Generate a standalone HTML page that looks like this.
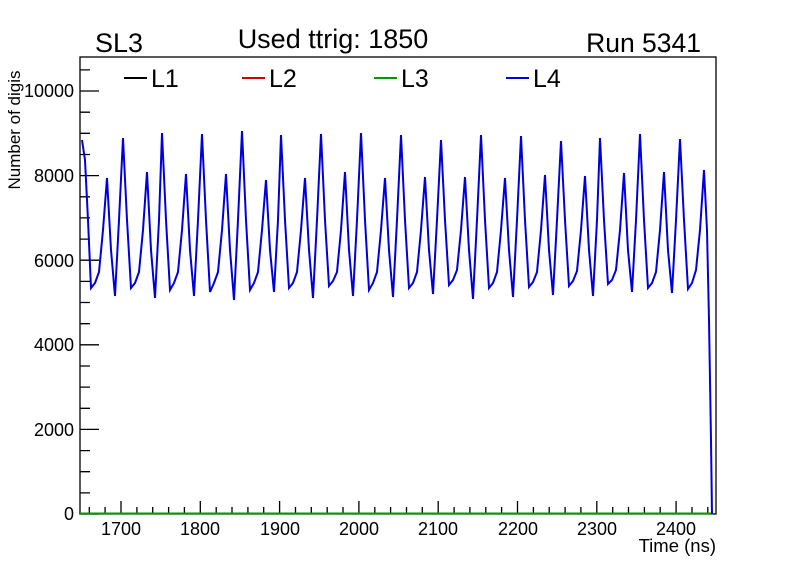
<!DOCTYPE html>
<html><head><meta charset="utf-8"><style>
html,body{margin:0;padding:0;background:#fff;}
svg{display:block;font-family:"Liberation Sans",sans-serif;}
</style></head><body>
<svg width="796" height="572" viewBox="0 0 796 572" xmlns="http://www.w3.org/2000/svg">
<rect width="796" height="572" fill="#fff"/>
<text x="95" y="52" font-size="27">SL3</text>
<text x="333" y="48" font-size="27" text-anchor="middle">Used ttrig: 1850</text>
<text x="701" y="52" font-size="26.5" text-anchor="end">Run 5341</text>
<rect x="80" y="57" width="636" height="457" fill="none" stroke="#000" stroke-width="1.3"/>
<g stroke="#000" stroke-width="1.3">
<path d="M80 514H99M80 429.4H99M80 344.8H99M80 260.2H99M80 175.6H99M80 91H99"/>
<path d="M80 492.9H90M80 471.7H90M80 450.6H90M80 408.3H90M80 387.1H90M80 366H90M80 323.7H90M80 302.5H90M80 281.4H90M80 239.1H90M80 217.9H90M80 196.8H90M80 154.5H90M80 133.3H90M80 112.2H90M80 69.9H90"/>
</g>
<g font-size="18" text-anchor="end">
<text x="74" y="520">0</text>
<text x="74" y="436">2000</text>
<text x="74" y="351">4000</text>
<text x="74" y="267">6000</text>
<text x="74" y="182">8000</text>
<text x="74" y="97">10000</text>
</g>
<text transform="translate(20,130) rotate(-90)" font-size="17" text-anchor="middle">Number of digis</text>
<g stroke="#000" stroke-width="1.3">
<path d="M121 514V501M200.3 514V501M279.6 514V501M358.9 514V501M438.2 514V501M517.5 514V501M596.8 514V501M676.1 514V501"/>
<path d="M89.3 514V507M105.1 514V507M136.9 514V507M152.7 514V507M168.6 514V507M184.4 514V507M216.2 514V507M232 514V507M247.9 514V507M263.7 514V507M295.5 514V507M311.3 514V507M327.2 514V507M343 514V507M374.8 514V507M390.6 514V507M406.5 514V507M422.3 514V507M454.1 514V507M469.9 514V507M485.8 514V507M501.6 514V507M533.4 514V507M549.2 514V507M565.1 514V507M580.9 514V507M612.7 514V507M628.5 514V507M644.4 514V507M660.2 514V507M692 514V507M707.8 514V507"/>
</g>
<g font-size="18" text-anchor="middle">
<text x="121" y="535">1700</text>
<text x="200" y="535">1800</text>
<text x="280" y="535">1900</text>
<text x="359" y="535">2000</text>
<text x="438" y="535">2100</text>
<text x="518" y="535">2200</text>
<text x="597" y="535">2300</text>
<text x="676" y="535">2400</text>
</g>
<text x="716" y="552" font-size="18.5" text-anchor="end">Time (ns)</text>
<line x1="124" y1="78" x2="147" y2="78" stroke="#000" stroke-width="2"/>
<text x="151" y="87" font-size="25">L1</text>
<line x1="242" y1="78" x2="265" y2="78" stroke="#d00000" stroke-width="2"/>
<text x="269" y="87" font-size="25">L2</text>
<line x1="374" y1="78" x2="397" y2="78" stroke="#009900" stroke-width="2"/>
<text x="401" y="87" font-size="25">L3</text>
<line x1="506" y1="78" x2="529" y2="78" stroke="#0000dd" stroke-width="2"/>
<text x="533" y="87" font-size="25">L4</text>
<line x1="80" y1="513.5" x2="713" y2="513.5" stroke="#009900" stroke-width="2"/>
<polyline fill="none" stroke="#0000dd" stroke-width="2" points="
82,140 85,160 88,220 91,288 95,283 99,272 103,230 107,178 111,250 115,296 119,220
123,138 127,220 131,288 135,283 139,272 143,230 147,172 151,250 155,298 159,220
162,133 166,220 170,290 174,283 178,272 182,230 186,174 190,250 194,296 198,220
202,134 206,220 210,292 214,283 218,272 222,230 226,174 230,250 234,300 238,220
242,131 246,220 250,290 254,283 258,272 262,230 266,180 270,250 274,292 278,220
281,135 285,220 289,288 293,283 297,272 301,230 305,178 309,250 313,298 317,220
321,134 325,220 329,286 333,281 337,272 341,230 345,172 349,250 353,296 357,220
361,133 365,220 369,290 373,283 377,272 381,230 385,178 389,250 393,297 397,220
401,135 405,220 409,288 413,283 417,272 421,230 425,177 429,250 433,294 437,220
441,140 445,220 449,285 453,280 457,270 461,230 465,177 469,250 473,299 477,220
481,135 485,220 489,288 493,283 497,272 501,230 505,178 509,250 513,297 517,220
521,136 525,220 529,287 533,282 537,272 541,230 545,175 549,250 553,295 557,220
561,141 565,220 569,286 573,281 577,271 581,230 585,176 589,250 593,296 597,220
600,138 604,220 608,284 612,280 616,270 620,230 624,173 628,250 632,292 636,220
640,134 644,220 648,288 652,283 656,272 660,230 664,172 668,250 672,293 676,220
680,139 684,220 688,289 692,283 696,270 700,230 704,170 707,230 709,320 711,440 712,514"/>
</svg>
</body></html>
